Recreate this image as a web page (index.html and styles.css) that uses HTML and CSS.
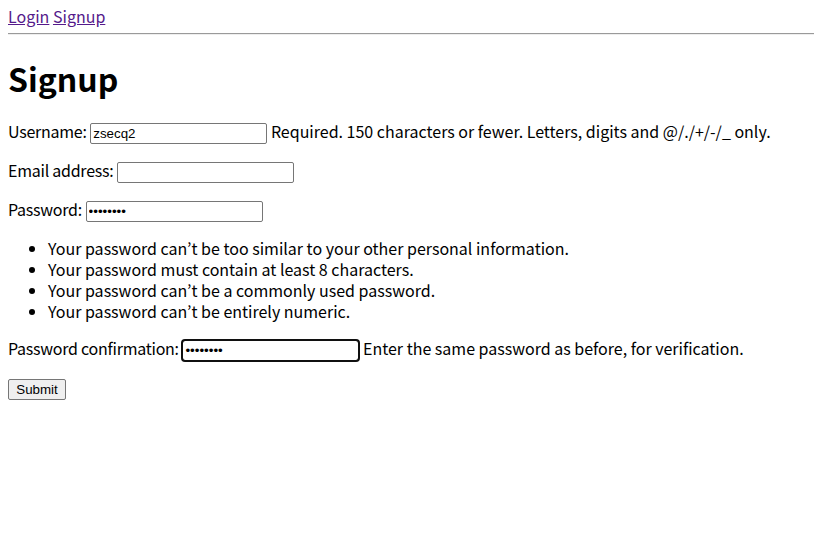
FILE: index.html
```html
<!DOCTYPE html>
<html>
<head>
<meta charset="utf-8">
<link rel="stylesheet" href="styles.css">
</head>
<body>
<nav class="nav"><a href="#">Login</a> <a href="#">Signup</a></nav>
<hr class="rule">
<h1 class="title">Signup</h1>
<form class="form">
<p class="row"><label class="lbl">Username:</label> <input class="field" type="text" value="zsecq2"> <span class="help">Required. 150 characters or fewer. Letters, digits and @/./+/-/_ only.</span></p>
<p class="row"><label class="lbl">Email address:</label> <input class="field" type="email"></p>
<p class="row"><label class="lbl">Password:</label> <input class="field" type="password" value="abcdefgh"></p>
<ul class="rules">
<li>Your password can’t be too similar to your other personal information.</li>
<li>Your password must contain at least 8 characters.</li>
<li>Your password can’t be a commonly used password.</li>
<li>Your password can’t be entirely numeric.</li>
</ul>
<p class="row"><label class="lbl">Password confirmation:</label> <input class="field focused" type="password" value="abcdefgh"> <span class="help">Enter the same password as before, for verification.</span></p>
<button class="submit" type="button">Submit</button>
</form>
</body>
</html>
```
FILE: styles.css
```css
html {
  background: #fff;
  overflow: hidden;
}
body {
  margin: 8px;
  font-family: "Noto Sans CJK KR", "Noto Sans", sans-serif;
  font-size: 16px;
  line-height: 21px;
  color: #000;
}
.nav {
  line-height: 17px;
}
.nav a {
  color: #551a8b;
  text-decoration: underline;
}
.rule {
  box-sizing: border-box;
  width: calc(100vw - 8px);
  margin: 8px 0 0 0;
  border: none;
  border-top: 1px solid #9a9a9a;
  border-bottom: 1px solid #eeeeee;
  height: 2px;
}
.title {
  font-size: 32px;
  line-height: 42px;
  font-weight: bold;
  margin: 22px 0 22px;
}
.lbl {
  letter-spacing: -0.25px;
}
.row {
  margin: 16px 0;
}
.field {
  box-sizing: border-box;
  width: 177px;
  height: 21px;
  padding: 1px 2px;
  border: 1px solid #767676;
  border-radius: 2px;
  font-family: "Liberation Sans", Arial, sans-serif;
  font-size: 13.33px;
  vertical-align: baseline;
  margin: 0;
}
.focused {
  outline: 2px solid #101010;
  outline-offset: -1px;
  border-radius: 3px;
}
.rules {
  margin: 16px 0;
  padding-left: 40px;
}
.submit {
  box-sizing: border-box;
  width: 58px;
  height: 21px;
  font-family: "Liberation Sans", Arial, sans-serif;
  font-size: 13.33px;
  padding: 1px 6px;
  border: 1px solid #767676;
  border-radius: 2px;
  background: #efefef;
  color: #000;
}
```
